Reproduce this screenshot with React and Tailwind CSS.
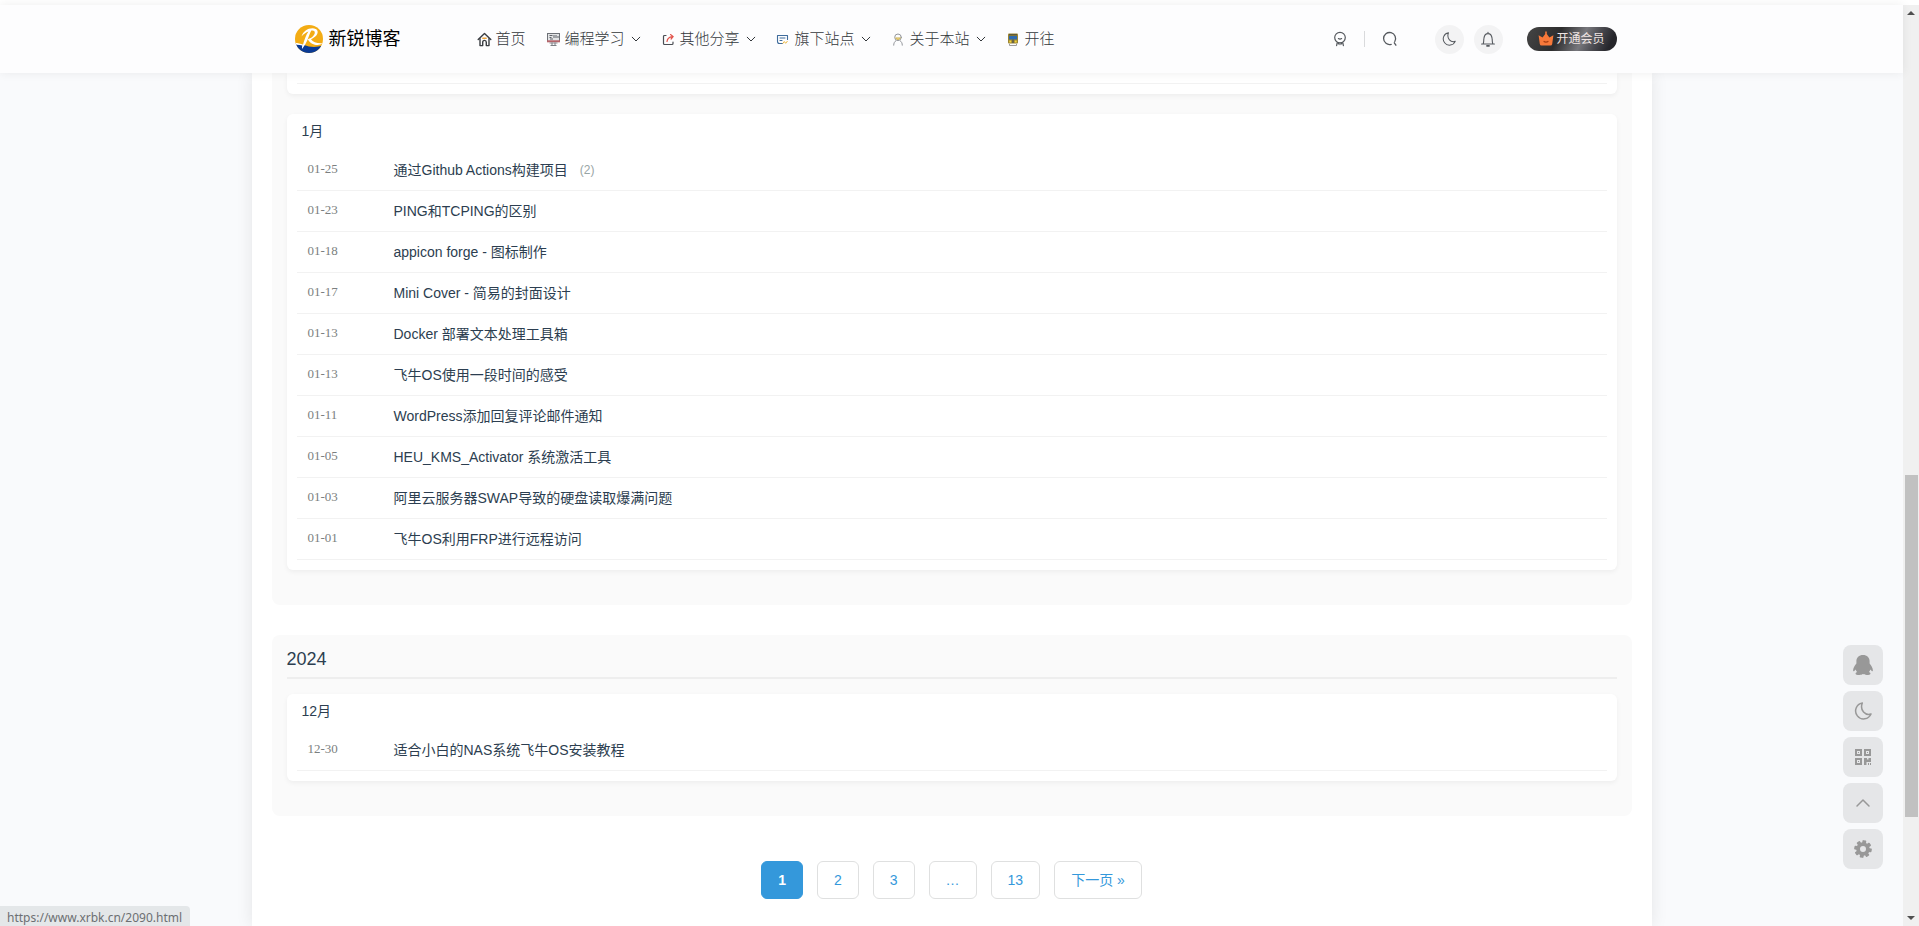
import React from "react";

const JANUARY = [
  ["01-25", "通过Github Actions构建项目", 2],
  ["01-23", "PING和TCPING的区别"],
  ["01-18", "appicon forge - 图标制作"],
  ["01-17", "Mini Cover - 简易的封面设计"],
  ["01-13", "Docker 部署文本处理工具箱"],
  ["01-13", "飞牛OS使用一段时间的感受"],
  ["01-11", "WordPress添加回复评论邮件通知"],
  ["01-05", "HEU_KMS_Activator 系统激活工具"],
  ["01-03", "阿里云服务器SWAP导致的硬盘读取爆满问题"],
  ["01-01", "飞牛OS利用FRP进行远程访问"],
];

const DECEMBER = [["12-30", "适合小白的NAS系统飞牛OS安装教程"]];

function Logo() {
  return (
    <svg viewBox="0 0 28 28" className="size-7 shrink-0" aria-hidden="true">
      <defs>
        <clipPath id="disc"><circle cx="14" cy="14" r="14" /></clipPath>
      </defs>
      <g clipPath="url(#disc)">
        <rect width="28" height="28" fill="#f3ac14" />
        <path d="M0 18.500 Q5 19 9 20 Q18 23.500 28 20.500 V28 H0Z" fill="#0a3a94" />
        <path d="M0 18 C3 18 5.500 18.700 8 19.400 C9.500 14 11.200 9.500 13.500 6.400 C11 7.200 8.500 9 6.500 11.500 C8 6.500 12.500 3.300 17.500 3.300 C22.500 3.300 24 7 21.500 10.300 C20 12.200 18 13.400 16 14.200 C18 17 21.500 18.600 27.500 18.300 C24 21.300 16.500 20.700 12.800 14.200 C16 13.300 19.300 11 19.800 8 C20 6 18.500 5.200 16.300 5.600 C13.500 11 12.500 18 7 24 C6.800 22.800 7 21.800 7.300 20.600 C5 19.800 2.500 19.500 0 19.700Z" fill="#fff" />
      </g>
    </svg>
  );
}

function HomeIcon() {
  return (
    <svg viewBox="0 0 15 15" className="size-[15px]" fill="none" stroke="#3a3d42" strokeWidth="1.4" strokeLinejoin="round" strokeLinecap="round" aria-hidden="true">
      <path d="M1.2 7.6 7.5 1.4l6.3 6.2" />
      <path d="M3 6.6v7h2.7v-3.4a1.8 1.8 0 0 1 3.6 0v3.4H12v-7" />
      <path d="M5.8 6.2h3.4" stroke="#f0a63c" />
    </svg>
  );
}

function MonitorIcon() {
  return (
    <svg viewBox="0 0 15 15" className="size-[15px]" fill="none" aria-hidden="true">
      <rect x="1.500" y="1.500" width="12" height="8" fill="#e3e4e6" stroke="#6d7076" />
      <path d="M3.500 3.500h3M3.500 5.500h2M8 3v3M10 3v3M12 4v2M4 7h3" stroke="#5d6067" />
      <path d="M1 9.300h13" stroke="#b5646a" strokeWidth="2" />
      <path d="M3.500 11h8" stroke="#8d8f94" />
      <path d="M6 10.500v2.500M9 10.500v2.500M4.500 13.500h6" stroke="#7b7e84" />
    </svg>
  );
}

function ShareIcon() {
  return (
    <svg viewBox="0 0 15 15" className="size-[15px]" fill="none" strokeWidth="1.2" strokeLinecap="round" aria-hidden="true">
      <path d="M5 3.500H3.500a1 1 0 0 0-1 1v7a1 1 0 0 0 1 1h7.500a1 1 0 0 0 1-1V10" stroke="#4b4e54" />
      <path d="M6 9.500C6.300 6.500 8 5 11.500 4.600M9.500 2.600l2.600 2-2 2.400" stroke="#e2544c" />
    </svg>
  );
}

function WindowIcon() {
  return (
    <svg viewBox="0 0 15 15" className="size-[15px]" fill="none" strokeLinecap="round" aria-hidden="true">
      <path d="M6.500 11.500H3.500a2 2 0 0 1-2-2V3.500h10v4" stroke="#3f6c9c" strokeWidth="1.100" strokeLinejoin="round" />
      <path d="M4 6h5M4 8.500h2" stroke="#3f6c9c" />
      <path d="M7 11.300l1.300-1.800 1.400 1.800 1.600-2" stroke="#efb944" />
    </svg>
  );
}

function PersonIcon() {
  return (
    <svg viewBox="0 0 15 15" className="size-[15px]" fill="none" stroke="#93969b" strokeLinecap="round" aria-hidden="true">
      <circle cx="7" cy="5.3" r="3.3" />
      <path d="M4.700 6.200a2.600 2.600 0 0 0 4.600 0z" fill="#e8c95a" stroke="#cbb04c" strokeWidth=".8" />
      <path d="M2.700 13.200c0-2 .8-3.600 2.100-4.400M11.300 13.200c0-2-.8-3.600-2.100-4.400" />
    </svg>
  );
}

function TrainIcon() {
  return (
    <svg viewBox="0 0 15 15" className="size-[15px]" aria-hidden="true">
      <rect x="2" y="1.500" width="10" height="10" rx="1" fill="#9a8432" />
      <rect x="3" y="4" width="8" height="3.400" fill="#2e6bb0" />
      <path d="M3 2.800h8" stroke="#4b4a35" />
      <rect x="3.300" y="8.500" width="2" height="2" fill="#f5d63c" />
      <rect x="8.700" y="8.500" width="2" height="2" fill="#f5d63c" />
      <path d="M7 7.500v3.500" stroke="#38465c" />
      <path d="M3.500 12v1.500h7V12" fill="none" stroke="#9b9b9b" />
    </svg>
  );
}

function Chevron() {
  return (
    <svg viewBox="0 0 10 10" className="size-[10px]" fill="none" stroke="currentColor" strokeLinecap="round" strokeLinejoin="round" aria-hidden="true">
      <path d="M1.2 3.2 5 7l3.800-3.800" />
    </svg>
  );
}

function Moon({ className, weight = 1.3 }) {
  return (
    <svg viewBox="0 0 18 18" className={className} fill="none" stroke="currentColor" strokeWidth={weight} strokeLinejoin="round" aria-hidden="true">
      <path d="M8.300 1A8 8 0 1 0 17 12C11.500 14 5.500 8.500 8.300 1Z" />
    </svg>
  );
}

const NAV = [
  ["首页", HomeIcon, false],
  ["编程学习", MonitorIcon, true],
  ["其他分享", ShareIcon, true],
  ["旗下站点", WindowIcon, true],
  ["关于本站", PersonIcon, true],
  ["开往", TrainIcon, false],
];

function Header() {
  return (
    <header className="relative z-10 shrink-0 bg-[#fdfdfe] shadow-[0_0_10px_rgba(0,0,0,0.07)]">
      <div className="mx-auto flex h-[68px] max-w-[1330px] items-center">
        <a href="#home" className="ml-2 flex items-center gap-1.5 text-lg text-black">
          <Logo />
          新锐博客
        </a>
        <nav className="ml-[76px] flex items-center gap-5 text-[15px] font-light text-[#33373b]">
          {NAV.map(([label, Icon, menu]) => (
            <a key={label} href={"#" + label} className="flex items-center whitespace-nowrap">
              <Icon />
              <span className="ml-1">{label}</span>
              {menu && <span className="ml-1.5"><Chevron /></span>}
            </a>
          ))}
        </nav>
        <div className="ml-auto flex items-center text-[#55595e]">
          <button type="button" aria-label="签到">
            <svg viewBox="0 0 16 16" className="size-4" fill="none" stroke="currentColor" strokeWidth="1.2" strokeLinecap="round" strokeLinejoin="round" aria-hidden="true">
              <circle cx="8" cy="6.6" r="5.3" />
              <path d="M6.4 7.6q1.600 1 3.200 0M5.200 11.600 4.600 14.600M8 12v1.600M10.800 11.600l.6 3M6.400 11.800v1.200M9.600 11.800v1.200" />
            </svg>
          </button>
          <span className="ml-4 h-4 w-px bg-[#d9dadc]" />
          <button type="button" aria-label="搜索" className="ml-[17px]">
            <svg viewBox="0 0 16 16" className="size-4" fill="none" stroke="currentColor" strokeWidth="1.3" strokeLinecap="round" aria-hidden="true">
              <path d="M9.200 13.300A6 6 0 1 1 12.800 10.500M12.300 11.800l1.600 2.400" />
            </svg>
          </button>
          <button type="button" aria-label="夜间模式" className="ml-[37px] flex size-[29px] items-center justify-center rounded-full bg-[#f3f3f4]">
            <Moon className="size-[14px]" />
          </button>
          <button type="button" aria-label="消息" className="ml-2.5 flex size-[29px] items-center justify-center rounded-full bg-[#f3f3f4]">
            <svg viewBox="0 0 16 16" className="size-4" fill="none" stroke="currentColor" strokeWidth="1.100" strokeLinecap="round" strokeLinejoin="round" aria-hidden="true">
              <path d="M1.600 13h12.800M3.200 13C4 11 3.600 9 3.900 7.400 4.300 4.400 6 2.600 8 2.600s3.700 1.800 4.100 4.800C12.400 9 12 11 12.800 13M8 1.200v1.200" />
              <path d="M6.900 14.900h2.200" strokeWidth="1.600" />
            </svg>
          </button>
          <button type="button" className="ml-6 flex h-6 w-[90px] items-center justify-center gap-0.5 rounded-full bg-[linear-gradient(115deg,#454545_0%,#2d2d2e_35%,#77777c_60%,#4a4a50_75%,#26262b_90%)] text-xs text-[#efe4e2]">
            <svg viewBox="0 0 16 16" className="size-4" aria-hidden="true">
              <path d="M.6 4.200 4.600 6.600 7.200 3V.6h1.600V3L11.400 6.600l4-2.400-1.200 8.800q-.2 1.600-1.800 1.600H3.600Q2 14.600 1.800 13Z" fill="#f8793a" />
              <path d="M5.600 10.300q2.400 1.800 4.800 0" fill="none" stroke="#a63d12" strokeWidth="1.200" />
            </svg>
            开通会员
          </button>
        </div>
      </div>
    </header>
  );
}

function MonthCard({ title, posts }) {
  return (
    <section className="rounded-md bg-white px-2.5 pb-2.5 shadow-[0_2px_5px_rgba(0,0,0,0.05)]">
      <h3 className="flex h-9 items-center pb-0.5 pl-[5px] text-sm">{title}</h3>
      <ul>
        {posts.map(([date, name, count], i) => (
          <li key={i} className="flex h-[41px] items-center border-b border-[#f2f2f2] pl-[11px]">
            <time className="w-[86px] shrink-0 pb-0.5 font-['Liberation_Serif',serif] text-[13px] text-[#7b7f80]">{date}</time>
            <a href="#post" className="text-sm">{name}</a>
            {count && <span className="ml-3 text-xs text-[#98a5a5]">({count})</span>}
          </li>
        ))}
      </ul>
    </section>
  );
}

const PAGE = "flex h-[38px] items-center rounded-md border px-4 text-sm";

function Pagination() {
  return (
    <nav aria-label="分页" className="mt-[45px] flex justify-center gap-3.5 text-[#3498db]">
      <a href="#p1" aria-current="page" className={PAGE + " border-[#3498db] bg-[#3498db] font-bold text-white"}>1</a>
      <a href="#p2" className={PAGE + " border-[#dfe0e0]"}>2</a>
      <a href="#p3" className={PAGE + " border-[#dfe0e0]"}>3</a>
      <span className={PAGE + " border-[#dfe0e0]"}>…</span>
      <a href="#p13" className={PAGE + " border-[#dfe0e0]"}>13</a>
      <a href="#next" className={PAGE + " border-[#dfe0e0]"}>下一页 »</a>
    </nav>
  );
}

const FLOAT = "flex size-10 items-center justify-center rounded-lg bg-[#e5e6e8]";

function FloatingTools() {
  return (
    <div className="fixed right-9 bottom-[57px] z-20 flex flex-col gap-1.5 text-[#989898]">
      <button type="button" aria-label="QQ" className={FLOAT}>
        <svg viewBox="0 0 20 20" className="size-5" fill="currentColor" aria-hidden="true">
          <path d="M10 0C6 0 3.400 2.700 3.400 6.200v2.200C1.800 10.400.2 13 .1 15.200c0 1.200.6 1.300 1.200.7l1.200-1.400c.4 1 .9 1.700 1.500 2.400-1 .4-1.500.9-1.500 1.500 0 1 1.700 1.500 3.900 1.500 1.500 0 2.900-.4 3.600-.9.7.5 2.100.9 3.600.9 2.200 0 3.900-.5 3.900-1.500 0-.6-.5-1.100-1.500-1.500.6-.7 1.100-1.400 1.500-2.400l1.200 1.400c.6.6 1.200.5 1.200-.7-.1-2.200-1.700-4.800-3.300-6.800V6.200C16.600 2.700 14 0 10 0Z" />
        </svg>
      </button>
      <button type="button" aria-label="切换夜间模式" className={FLOAT}>
        <Moon className="size-[18px]" weight={1.5} />
      </button>
      <button type="button" aria-label="二维码" className={FLOAT}>
        <svg viewBox="0 0 16 16" className="size-4" fill="none" stroke="currentColor" strokeWidth="2" aria-hidden="true">
          <path d="M1 1h5v5H1zM10 1h5v5h-5zM1 10h5v5H1z" />
          <path d="M9 9h3v1.500h1.500V9H16v4h-4.500v3H9zM13 14h1v2h-1zM15 14h1v2h-1zM3 3h1v1H3zM12 3h1v1h-1zM3 12h1v1H3z" fill="currentColor" stroke="none" />
        </svg>
      </button>
      <button type="button" aria-label="返回顶部" className={FLOAT}>
        <svg viewBox="0 0 16 16" className="size-4" fill="none" stroke="currentColor" strokeWidth="1.500" strokeLinecap="round" strokeLinejoin="round" aria-hidden="true">
          <path d="M2 11l6-6 6 6" />
        </svg>
      </button>
      <button type="button" aria-label="设置" className={FLOAT}>
        <svg viewBox="-9 -9 18 18" className="size-[18px]" aria-hidden="true">
          <circle r="4.900" fill="none" stroke="currentColor" strokeWidth="3.800" />
          {[0, 45, 90, 135, 180, 225, 270, 315].map((a) => (
            <rect key={a} x="-1.900" y="-8.800" width="3.800" height="3.500" rx=".8" fill="currentColor" transform={`rotate(${a + 10})`} />
          ))}
        </svg>
      </button>
    </div>
  );
}

function ScrollBar() {
  return (
    <div className="flex w-4 shrink-0 flex-col bg-[#f0f0f0]" aria-hidden="true">
      <div className="flex h-4 items-center justify-center">
        <svg viewBox="0 0 8 4" className="h-1 w-2" fill="#505050"><path d="M0 4 4 0l4 4z" /></svg>
      </div>
      <div className="grow-[454] basis-0" />
      <div className="mr-px ml-0.5 grow-[342] basis-0 bg-[#c1c1c1]" />
      <div className="grow-[93] basis-0" />
      <div className="flex h-4 items-center justify-center">
        <svg viewBox="0 0 8 4" className="h-1 w-2" fill="#505050"><path d="M0 0l4 4 4-4z" /></svg>
      </div>
    </div>
  );
}

export default function App() {
  return (
    <div className="flex h-screen flex-col overflow-hidden bg-white pt-[5px] font-['Liberation_Sans','Noto_Sans_CJK_SC',sans-serif] text-[#2c3e50]">
      <div className="flex min-h-0 grow">
        <div className="flex min-w-0 grow flex-col bg-[#f9fafc]">
          <Header />
          <main className="mx-auto w-full max-w-[1400px] grow bg-white px-5 shadow-[0_0_16px_rgba(0,20,10,0.09)]">
            <article className="rounded-b-lg bg-[#fafafa] px-[15px] pb-[35px]">
              <div className="mb-5 rounded-b-md bg-white px-2.5 pb-2.5 shadow-[0_2px_5px_rgba(0,0,0,0.05)]">
                <div className="h-[11px] border-b border-[#f2f2f2]" />
              </div>
              <MonthCard title="1月" posts={JANUARY} />
            </article>
            <article className="mt-[30px] rounded-lg bg-[#fafafa] px-[15px] pb-[35px]">
              <h2 className="mb-[15px] flex h-11 items-center border-b-2 border-[#eeeeee] pt-1.5 text-lg">2024</h2>
              <MonthCard title="12月" posts={DECEMBER} />
            </article>
            <Pagination />
          </main>
        </div>
        <ScrollBar />
      </div>
      <FloatingTools />
      <div className="fixed bottom-0 left-0 z-20 h-5 rounded-tr bg-[#e4e7e9] pr-2 pl-[7px] font-['Noto_Sans',sans-serif] text-xs leading-6 text-[#6c6f72]">
        https://www.xrbk.cn/2090.html
      </div>
    </div>
  );
}
